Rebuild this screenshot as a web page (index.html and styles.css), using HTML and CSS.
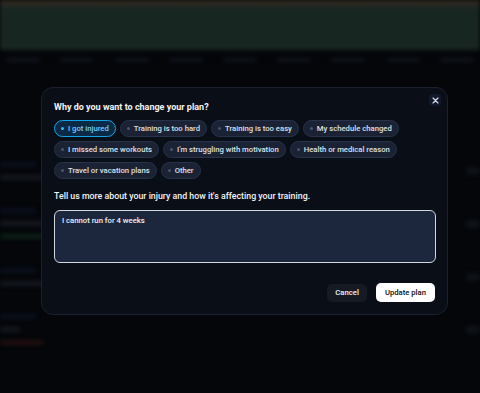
FILE: index.html
```html
<!DOCTYPE html>
<html>
	<head>
		<title>Change plan</title>
		<link rel="stylesheet" href="styles.css">
	</head>
	<body>
		<div class="app">
			<div class="chart"></div>
			<div class="days">
				<span></span><span></span><span></span><span></span><span></span><span></span><span></span><span></span><span></span>
			</div>
			<div class="rows">
				<div class="row">
					<div class="lines"><span class="line blue"></span><span class="line"></span></div>
					<span class="blob"></span>
				</div>
				<div class="row">
					<div class="lines"><span class="line blue"></span><span class="line"></span><span class="line green"></span></div>
					<span class="blob"></span>
				</div>
				<div class="row">
					<div class="lines"><span class="line blue"></span><span class="line"></span></div>
					<span class="blob"></span>
				</div>
				<div class="row">
					<div class="lines"><span class="line blue"></span><span class="line short"></span><span class="line red"></span></div>
					<span class="blob"></span>
				</div>
			</div>
		</div>
		<div class="overlay">
			<div class="modal">
				<button class="close" type="button">
					<svg width="7" height="7" viewBox="0 0 10 10"><path d="M1.5 1.5l7 7M8.5 1.5l-7 7" stroke="#d7dce4" stroke-width="1.8" stroke-linecap="round"/></svg>
				</button>
				<h2 class="title">Why do you want to change your plan?</h2>
				<div class="chips">
					<span class="chip active"><i></i>I got injured</span>
					<span class="chip"><i></i>Training is too hard</span>
					<span class="chip"><i></i>Training is too easy</span>
					<span class="chip"><i></i>My schedule changed</span>
					<span class="chip"><i></i>I missed some workouts</span>
					<span class="chip"><i></i>I'm struggling with motivation</span>
					<span class="chip"><i></i>Health or medical reason</span>
					<span class="chip"><i></i>Travel or vacation plans</span>
					<span class="chip"><i></i>Other</span>
				</div>
				<label class="label" for="details">Tell us more about your injury and how it's affecting your training.</label>
				<textarea id="details" class="details">I cannot run for 4 weeks</textarea>
				<div class="actions">
					<button class="button cancel" type="button">Cancel</button>
					<button class="button primary" type="button">Update plan</button>
				</div>
			</div>
		</div>
	</body>
</html>
```

FILE: styles.css
```css
body {
	margin: 0;
	padding: 0;
	overflow: hidden;
	background-color: #04060a;
	font-family: Roboto, "Liberation Sans", sans-serif;
}
.app {
	height: 393px;
	filter: blur(2px);
}
.chart {
	height: 50px;
	background-color: #18251f;
	background-image:
		linear-gradient(to bottom, rgba(70, 45, 30, 0.7) 0, rgba(70, 45, 30, 0) 9px),
		repeating-linear-gradient(to right, #1a2925 0, #1a2925 3px, #15211d 3px, #15211d 5px);
	box-shadow: 0 4px 6px #04060a;
}
.days {
	display: flex;
	gap: 20px;
	padding: 8px 6px;
}
.days span {
	width: 36px;
	height: 4px;
	border-radius: 2px;
	background-color: #10141b;
}
.rows {
	display: flex;
	flex-direction: column;
	gap: 20px;
	padding-top: 84px;
}
.row {
	display: flex;
	justify-content: space-between;
	align-items: center;
	height: 33px;
}
.lines {
	display: flex;
	flex-direction: column;
	gap: 8px;
}
.line {
	width: 44px;
	height: 5px;
	border-radius: 3px;
	background-color: #15191f;
}
.line.blue {
	width: 36px;
	background-color: #0a101b;
}
.line.green {
	background-color: #0e1f16;
}
.line.red {
	background-color: #220f0e;
}
.line.short {
	width: 20px;
}
.blob {
	width: 14px;
	height: 8px;
	border-radius: 4px;
	background-color: #0f1319;
}
.overlay {
	position: fixed;
	top: 0;
	left: 0;
	right: 0;
	bottom: 0;
	display: flex;
	align-items: flex-start;
	padding: 87px 0 0 41px;
}
.modal {
	position: relative;
	width: 407px;
	box-sizing: border-box;
	padding: 12px 11px 12px 12px;
	background-color: #0a0e17;
	border: 1px solid #1b2130;
	border-radius: 12px;
	display: flex;
	flex-direction: column;
}
.close {
	position: absolute;
	top: 6px;
	right: 6px;
	width: 12px;
	height: 12px;
	padding: 0;
	border: none;
	border-radius: 3px;
	background-color: #111a2d;
	display: flex;
	align-items: center;
	justify-content: center;
}
.title {
	margin: 0 0 6px;
	font-size: 9px;
	line-height: 14px;
	font-weight: 700;
	color: #f3f5f8;
}
.chips {
	display: flex;
	flex-wrap: wrap;
	gap: 4px 4px;
}
.chip {
	display: inline-flex;
	align-items: center;
	gap: 4px;
	height: 17px;
	box-sizing: border-box;
	padding: 0 6px;
	border: 1px solid #28324a;
	border-radius: 9px;
	background-color: #1a2234;
	font-size: 7.7px;
	font-weight: 500;
	color: #dde1e8;
	white-space: nowrap;
}
.chip i {
	width: 3px;
	height: 3px;
	border-radius: 50%;
	background-color: #4a566b;
}
.chip.active {
	border-color: #0ea5e9;
	background-color: #0a2a45;
	color: #7ccdf6;
}
.chip.active i {
	background-color: #38bdf8;
}
.label {
	margin-top: 11px;
	font-size: 8.8px;
	line-height: 12px;
	font-weight: 500;
	color: #f3f5f8;
}
.details {
	margin-top: 8px;
	width: 382px;
	height: 53px;
	box-sizing: border-box;
	padding: 5px 7px;
	background-color: #1c273e;
	border: 1.5px solid #d3d7de;
	border-radius: 6px;
	font-family: Roboto, "Liberation Sans", sans-serif;
	font-size: 7.7px;
	font-weight: 500;
	color: #eef1f5;
	resize: none;
	outline: none;
}
.actions {
	display: flex;
	justify-content: flex-end;
	align-items: center;
	gap: 9px;
	margin-top: 20px;
	padding-right: 1px;
}
.button {
	border: none;
	border-radius: 5px;
	font-family: Roboto, "Liberation Sans", sans-serif;
	font-size: 7.7px;
	font-weight: 500;
	padding: 0 8px;
	height: 18px;
}
.cancel {
	background-color: #151a23;
	color: #f3f5f8;
}
.primary {
	background-color: #ffffff;
	color: #0b0f18;
	height: 19px;
	padding: 0 9px;
}
```
